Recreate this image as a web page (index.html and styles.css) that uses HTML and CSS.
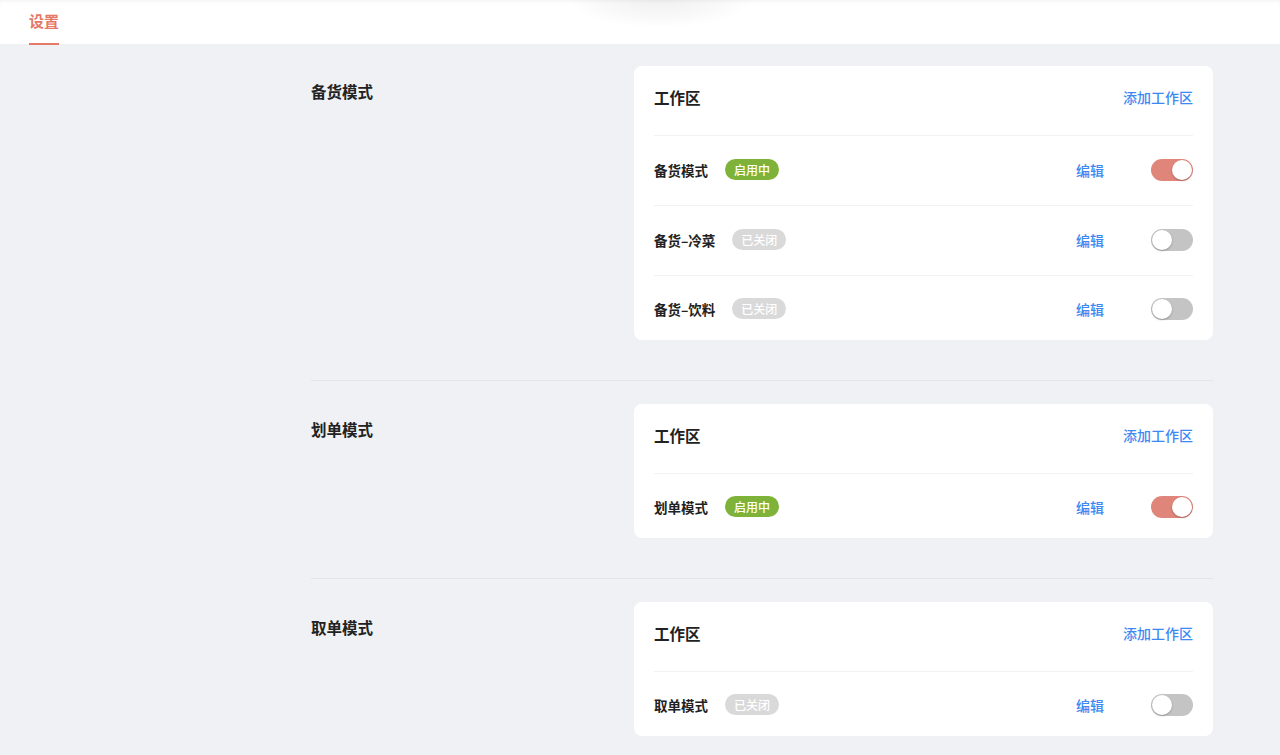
FILE: index.html
```html
<!DOCTYPE html>
<html lang="zh-CN">
<head>
<meta charset="utf-8">
<title>设置</title>
<link rel="stylesheet" href="styles.css">
</head>
<body>
<header class="topbar">
  <div class="top-shadow"></div>
  <nav class="tabs">
    <a class="tab active">设置</a>
  </nav>
</header>
<main class="content">
  <section class="mode">
    <div class="mode-label">备货模式</div>
    <div class="card">
      <div class="card-head">
        <span class="card-title">工作区</span>
        <a class="link">添加工作区</a>
      </div>
      <div class="row">
        <span class="row-name">备货模式</span>
        <span class="badge on">启用中</span>
        <a class="link edit">编辑</a>
        <span class="switch on"><span class="knob"></span></span>
      </div>
      <div class="row">
        <span class="row-name">备货–冷菜</span>
        <span class="badge off">已关闭</span>
        <a class="link edit">编辑</a>
        <span class="switch"><span class="knob"></span></span>
      </div>
      <div class="row">
        <span class="row-name">备货–饮料</span>
        <span class="badge off">已关闭</span>
        <a class="link edit">编辑</a>
        <span class="switch"><span class="knob"></span></span>
      </div>
    </div>
  </section>
  <section class="mode">
    <div class="mode-label">划单模式</div>
    <div class="card">
      <div class="card-head">
        <span class="card-title">工作区</span>
        <a class="link">添加工作区</a>
      </div>
      <div class="row">
        <span class="row-name">划单模式</span>
        <span class="badge on">启用中</span>
        <a class="link edit">编辑</a>
        <span class="switch on"><span class="knob"></span></span>
      </div>
    </div>
  </section>
  <section class="mode">
    <div class="mode-label">取单模式</div>
    <div class="card">
      <div class="card-head">
        <span class="card-title">工作区</span>
        <a class="link">添加工作区</a>
      </div>
      <div class="row">
        <span class="row-name">取单模式</span>
        <span class="badge off">已关闭</span>
        <a class="link edit">编辑</a>
        <span class="switch"><span class="knob"></span></span>
      </div>
    </div>
  </section>
</main>
</body>
</html>
```

FILE: styles.css
```css
* { box-sizing: border-box; }
html, body {
  margin: 0;
  padding: 0;
  height: 100%;
}
body {
  background: #f0f1f5;
  font-family: "PingFang SC", "Noto Sans CJK SC", "Noto Sans", sans-serif;
  color: #222;
  overflow: hidden;
}
a { text-decoration: none; cursor: pointer; }

.topbar {
  position: relative;
  height: 44px;
  background: #fff;
  box-shadow: inset 0 3px 4px -2px rgba(0,0,0,0.06);
}
.top-shadow {
  position: absolute;
  left: 565px;
  top: -28px;
  width: 190px;
  height: 56px;
  border-radius: 50%;
  background: radial-gradient(ellipse at center, rgba(0,0,0,0.06) 0%, rgba(0,0,0,0.025) 45%, rgba(0,0,0,0) 70%);
  pointer-events: none;
}
.tabs {
  display: flex;
  height: 44px;
  padding-left: 29px;
}
.tab {
  display: flex;
  align-items: center;
  font-size: 15px;
  line-height: 20px;
  font-weight: 600;
  color: #e57866;
  height: 45px;
  padding-bottom: 2px;
  border-bottom: 2px solid #e57866;
}

.content {
  margin-left: 311px;
  width: 902px;
  padding-top: 22px;
}
.mode {
  display: flex;
  align-items: flex-start;
  padding-bottom: 40px;
  margin-bottom: 23px;
  border-bottom: 1px solid #e3e4e8;
}
.mode:last-child { border-bottom: none; }
.mode-label {
  flex: 1;
  margin-top: 13px;
  font-size: 15.5px;
  line-height: 24px;
  font-weight: 700;
  color: #222;
}
.card {
  width: 579px;
  background: #fff;
  border-radius: 8px;
  padding: 0 20px;
}
.card-head {
  display: flex;
  align-items: center;
  justify-content: space-between;
  height: 69px;
  padding-bottom: 8px;
}
.card-title {
  font-size: 15.5px;
  font-weight: 700;
  line-height: 24px;
  color: #222;
}
.link {
  font-size: 14px;
  line-height: 20px;
  color: #3d88f2;
  font-weight: 500;
}
.row {
  display: flex;
  align-items: center;
  border-top: 1px solid #f1f2f4;
  height: 70px;
  padding-bottom: 2px;
}
.row:last-child {
  height: 65px;
  padding-top: 1px;
  padding-bottom: 0;
}
.row-name {
  font-size: 13.5px;
  line-height: 20px;
  font-weight: 700;
  color: #222;
}
.badge {
  margin-left: 17px;
  height: 21px;
  padding: 0 9px;
  border-radius: 11px;
  font-size: 12px;
  line-height: 21px;
  color: #fff;
  font-weight: 500;
}
.badge.on { background: #7fb238; }
.badge.off { background: #d9d9d9; }
.edit {
  margin-left: auto;
  margin-right: 47px;
}
.switch {
  position: relative;
  width: 42px;
  height: 22px;
  border-radius: 11px;
  background: #c4c4c4;
  flex: none;
}
.switch.on { background: #e0857a; }
.knob {
  position: absolute;
  top: 1px;
  left: 1px;
  width: 20px;
  height: 20px;
  border-radius: 50%;
  background: #fff;
  box-shadow: 0 1px 2px rgba(0,0,0,0.25);
}
.switch.on .knob {
  left: 21px;
}
```
